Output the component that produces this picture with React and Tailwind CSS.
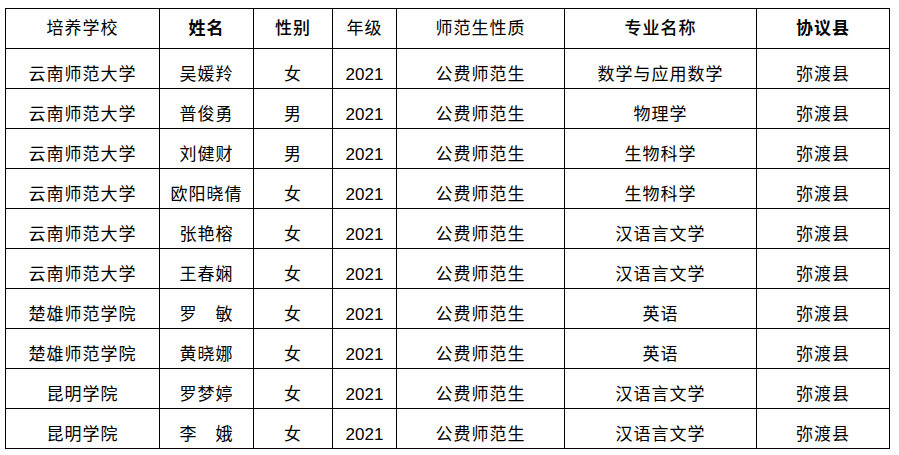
import React from "react";

const cols = [
    "w-[154px]",
    "w-[94px]",
    "w-[79px]",
    "w-[64px]",
    "w-[168px]",
    "w-[192px]",
    "w-[133px]",
];

const header = [
    { text: "培养学校", cls: "" },
    { text: "姓名", cls: "font-bold" },
    { text: "性别", cls: "font-medium" },
    { text: "年级", cls: "" },
    { text: "师范生性质", cls: "" },
    { text: "专业名称", cls: "font-medium" },
    { text: "协议县", cls: "font-bold" },
];

const rows = [
    ["云南师范大学", "吴媛羚", "女", "2021", "公费师范生", "数学与应用数学", "弥渡县"],
    ["云南师范大学", "普俊勇", "男", "2021", "公费师范生", "物理学", "弥渡县"],
    ["云南师范大学", "刘健财", "男", "2021", "公费师范生", "生物科学", "弥渡县"],
    ["云南师范大学", "欧阳晓倩", "女", "2021", "公费师范生", "生物科学", "弥渡县"],
    ["云南师范大学", "张艳榕", "女", "2021", "公费师范生", "汉语言文学", "弥渡县"],
    ["云南师范大学", "王春娴", "女", "2021", "公费师范生", "汉语言文学", "弥渡县"],
    ["楚雄师范学院", "罗\u3000敏", "女", "2021", "公费师范生", "英语", "弥渡县"],
    ["楚雄师范学院", "黄晓娜", "女", "2021", "公费师范生", "英语", "弥渡县"],
    ["昆明学院", "罗梦婷", "女", "2021", "公费师范生", "汉语言文学", "弥渡县"],
    ["昆明学院", "李\u3000娥", "女", "2021", "公费师范生", "汉语言文学", "弥渡县"],
];

function Cell({ i, children, className = "" }) {
    return (
        <div className={`${cols[i]} h-[40px] shrink-0 border-r border-b border-black flex items-center justify-center ${className}`}>
            {children}
        </div>
    );
}

export default function App() {
    return (
        <div className="w-[899px] h-[455px] bg-white pt-[8px] pl-[5px] text-black text-[17px] font-['Liberation_Sans','Noto_Sans_CJK_SC',sans-serif]">
            <div className="inline-flex flex-col border-l border-t border-black">
                <div className="flex">
                    {header.map((h, i) => (
                        <Cell key={i} i={i} className={`tracking-[1px] ${h.cls}`}>{h.text}</Cell>
                    ))}
                </div>
                {rows.map((r, ri) => (
                    <div key={ri} className="flex">
                        {r.map((t, i) => (
                            <Cell key={i} i={i} className={i === 3 ? "pt-[13px]" : "pt-[13px] tracking-[1px]"}>{t}</Cell>
                        ))}
                    </div>
                ))}
            </div>
        </div>
    );
}
